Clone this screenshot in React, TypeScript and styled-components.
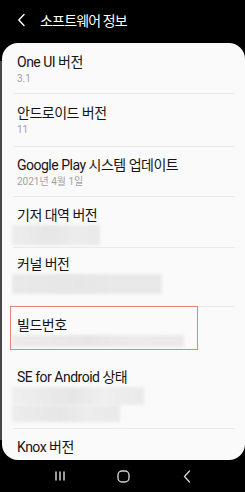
import React from 'react';
import styled, { createGlobalStyle } from 'styled-components';

const GlobalStyle = createGlobalStyle`
  html, body {
    margin: 0;
    padding: 0;
    background: #000;
  }
  body {
    font-family: Roboto, "Noto Sans CJK KR", sans-serif;
  }
`;

interface InfoRow {
  title: string;
  sub?: string;
  /** blurred value blocks: [width, height, shade] */
  blurs?: Array<[number, number, string]>;
  padTop: number;
  padBottom: number;
  divider?: boolean;
  highlighted?: boolean;
}

const ROWS: InfoRow[] = [
  { title: 'One UI 버전', sub: '3.1', padTop: 9, padBottom: 7, divider: true },
  { title: '안드로이드 버전', sub: '11', padTop: 9, padBottom: 9, divider: true },
  { title: 'Google Play 시스템 업데이트', sub: '2021년 4월 1일', padTop: 8, padBottom: 7, divider: true },
  { title: '기저 대역 버전', blurs: [[88, 20, '#ececec']], padTop: 8, padBottom: 2, divider: true },
  { title: '커널 버전', blurs: [[150, 20, '#e9e9e9']], padTop: 6, padBottom: 12, divider: true },
  { title: '빌드번호', blurs: [[172, 12, '#ebebeb']], padTop: 8, padBottom: 3, highlighted: true },
  {
    title: 'SE for Android 상태',
    blurs: [[132, 18, '#efefef'], [108, 17, '#ececec']],
    padTop: 16,
    padBottom: 6,
    divider: true,
  },
  { title: 'Knox 버전', padTop: 8, padBottom: 10 },
];

const Screen = styled.div`
  width: 245px;
  height: 492px;
  background: #000;
  display: flex;
  flex-direction: column;
  overflow: hidden;
`;

const Header = styled.header`
  height: 43px;
  flex-shrink: 0;
  display: flex;
  align-items: center;
  gap: 14px;
  padding: 0 0 4px 17px;
  box-sizing: border-box;
  color: #fff;
`;

const Title = styled.h1`
  margin: 0;
  font-family: "Noto Sans CJK KR", sans-serif;
  font-size: 14px;
  font-weight: 400;
  letter-spacing: -0.8px;
  line-height: 20px;
`;

const Body = styled.div`
  flex: 1;
  display: flex;
  min-height: 0;
`;

const Stripe = styled.div`
  width: 2px;
  margin: 18px 0 20px;
  background: #4a4a4a;
`;

const Card = styled.section`
  flex: 1;
  background: #fafafa;
  border-radius: 16px;
  padding: 0 10px 0 11px;
  overflow: hidden;
`;

const Row = styled.div<{ $top: number; $bottom: number; $divider?: boolean }>`
  position: relative;
  padding: ${p => p.$top}px 0 ${p => p.$bottom}px 4px;
  border-bottom: 1px solid ${p => (p.$divider ? '#e9e9e9' : 'transparent')};
`;

const RowTitle = styled.div`
  font-size: 14px;
  line-height: 20px;
  color: #151515;
  letter-spacing: -0.5px;
`;

const RowSub = styled.div`
  font-size: 10px;
  line-height: 14px;
  color: #a2a2a2;
`;

const BlurStack = styled.div`
  display: flex;
  flex-direction: column;
  margin-left: -5px;
`;

const Blur = styled.div<{ $w: number; $h: number; $shade: string }>`
  width: ${p => p.$w}px;
  height: ${p => p.$h}px;
  background: linear-gradient(
    90deg,
    ${p => p.$shade} 0%,
    #e6e6e6 45%,
    ${p => p.$shade} 70%,
    #e9e9e9 100%
  );
  filter: blur(1.5px);
`;

const Highlight = styled.div`
  position: absolute;
  left: -3px;
  top: -1px;
  width: 188px;
  bottom: 0;
  border: 1.5px solid #e4847a;
  box-sizing: border-box;
  pointer-events: none;
`;

const NavBar = styled.nav`
  height: 32px;
  flex-shrink: 0;
  display: grid;
  grid-template-columns: repeat(3, 1fr);
  align-items: center;
  justify-items: center;
  padding: 0 26px 0 28px;
  color: #cfcfcf;
`;

const BackChevron = () => (
  <svg width="9" height="14" viewBox="0 0 9 14" fill="none">
    <path d="M7 1.5 L1.8 7 L7 12.5" stroke="#fff" strokeWidth="1.4" strokeLinecap="round" strokeLinejoin="round" />
  </svg>
);

const RecentsIcon = () => (
  <svg width="12" height="12" viewBox="0 0 12 12" fill="none">
    <path d="M2 1.5 V10.5 M6 1.5 V10.5 M10 1.5 V10.5" stroke="currentColor" strokeWidth="1.5" />
  </svg>
);

const HomeIcon = () => (
  <svg width="13" height="13" viewBox="0 0 13 13" fill="none">
    <rect x="1" y="1" width="11" height="11" rx="4" stroke="currentColor" strokeWidth="1.4" />
  </svg>
);

const NavBackIcon = () => (
  <svg width="10" height="13" viewBox="0 0 10 13" fill="none">
    <path d="M7.5 1 L2.5 6.5 L7.5 12" stroke="currentColor" strokeWidth="1.4" strokeLinecap="round" strokeLinejoin="round" />
  </svg>
);

const App: React.FC = () => (
  <Screen>
    <GlobalStyle />
    <Header>
      <BackChevron />
      <Title>소프트웨어 정보</Title>
    </Header>
    <Body>
      <Stripe />
      <Card>
        {ROWS.map(row => (
          <Row key={row.title} $top={row.padTop} $bottom={row.padBottom} $divider={row.divider}>
            <RowTitle>{row.title}</RowTitle>
            {row.sub && <RowSub>{row.sub}</RowSub>}
            {row.blurs && (
              <BlurStack>
                {row.blurs.map(([w, h, shade], i) => (
                  <Blur key={i} $w={w} $h={h} $shade={shade} />
                ))}
              </BlurStack>
            )}
            {row.highlighted && <Highlight />}
          </Row>
        ))}
      </Card>
    </Body>
    <NavBar>
      <RecentsIcon />
      <HomeIcon />
      <NavBackIcon />
    </NavBar>
  </Screen>
);

export default App;
